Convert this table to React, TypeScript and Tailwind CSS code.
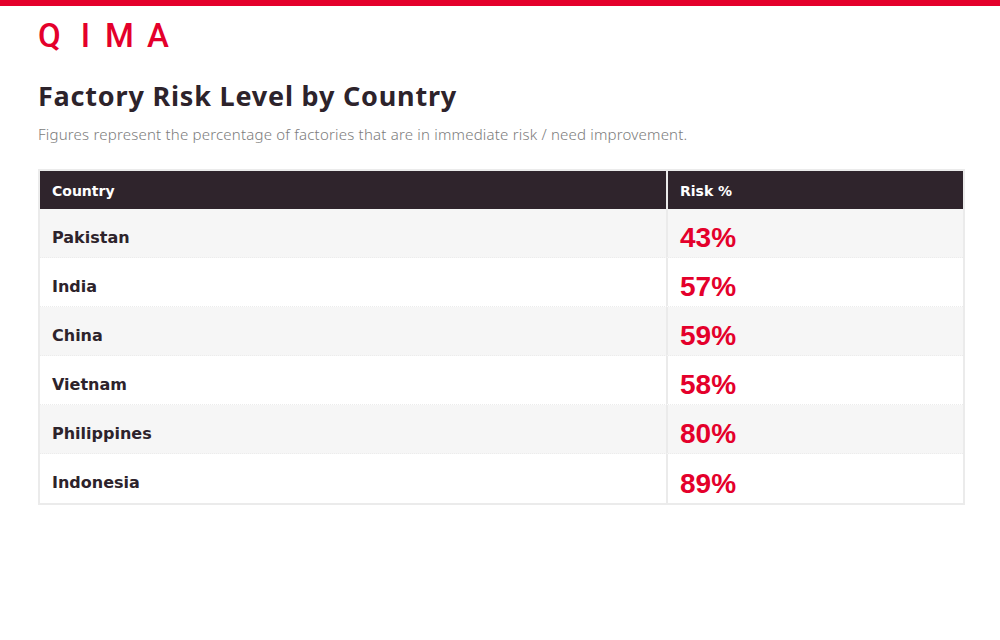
const rows = [
  { country: "Pakistan", risk: "43%" },
  { country: "India", risk: "57%" },
  { country: "China", risk: "59%" },
  { country: "Vietnam", risk: "58%" },
  { country: "Philippines", risk: "80%" },
  { country: "Indonesia", risk: "89%" },
];

const sans = "font-['Noto_Sans',sans-serif]";
const wide = "font-['DejaVu_Sans',sans-serif]";

function Logo() {
  return (
    <div className="flex items-center h-[33px] text-[33px] leading-[33px] text-[#e4002b] font-['Roboto',sans-serif] font-medium">
      <span>Q</span>
      <span className="ml-[20px]">I</span>
      <span className="ml-[15px]">M</span>
      <span className="ml-[13px]">A</span>
    </div>
  );
}

export default function App() {
  return (
    <div className={`w-[1000px] h-[640px] bg-white ${sans}`}>
      <div className="h-[6px] bg-[#e4002b]" />
      <div className="px-[38px]">
        <div className="mt-[13px]">
          <Logo />
        </div>

        <h1 className="mt-[28px] text-[27px] leading-[32px] font-bold text-[#2d232b] tracking-[0.8px]">
          Factory Risk Level by Country
        </h1>
        <p className="mt-[12px] text-[15px] leading-[20px] font-light text-[#7c7c7c] tracking-[0.2px]">
          Figures represent the percentage of factories that are in immediate risk / need improvement.
        </p>

        <div className="mt-[25px] w-[927px] border-2 border-[#ebebeb]">
          <div className={`flex h-[38px] bg-[#2f242c] text-white text-[14px] font-bold ${wide}`}>
            <div className="w-[628px] pl-[12px] pt-[10px] border-r-2 border-[#ebebeb]">Country</div>
            <div className="flex-1 pl-[12px] pt-[10px]">Risk %</div>
          </div>
          {rows.map((r, i) => (
            <div
              key={r.country}
              className={`flex h-[49px] border-b border-dotted border-[#ececec] last:border-b-0 ${
                i % 2 === 0 ? "bg-[#f6f6f6]" : "bg-white"
              }`}
            >
              <div className={`w-[628px] pl-[12px] flex items-center pt-[9px] border-r-2 border-[#ebebeb] text-[16px] font-bold text-[#2d232b] ${wide}`}>
                {r.country}
              </div>
              <div className="flex-1 pl-[12px] flex items-center pt-[10px] text-[28px] font-bold text-[#e4002b] font-['Liberation_Sans',sans-serif]">
                {r.risk}
              </div>
            </div>
          ))}
        </div>
      </div>
    </div>
  );
}
